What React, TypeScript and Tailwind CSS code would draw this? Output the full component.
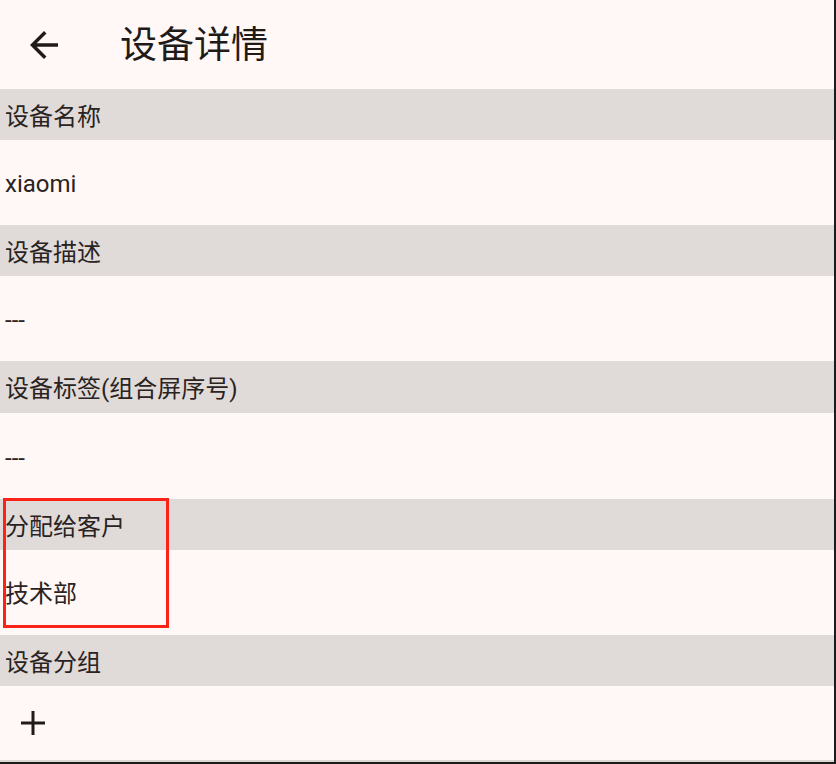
import React from "react";

const font = { fontFamily: 'Roboto, "Noto Sans CJK SC", sans-serif' };

function Header({ label, h }: { label: string; h: string }) {
  return (
    <div className={`flex items-center bg-[#e0dbd8] pl-[5px] pt-[4px] text-[24px] text-[#2a2322] ${h}`}>
      {label}
    </div>
  );
}

function Value({ text, h }: { text: string; h: string }) {
  return (
    <div className={`flex items-center pl-[5px] pt-[3px] text-[24px] text-[#2a2322] ${h}`}>
      {text}
    </div>
  );
}

export default function App() {
  return (
    <div
      className="relative h-[764px] w-[836px] overflow-hidden bg-[#fff8f6] border-r-[2px] border-r-[#1c1b1b]"
      style={font}
    >
      <div className="flex flex-col">
        <div className="flex h-[89px] items-center">
          <div className="ml-[23px] flex h-[42px] w-[42px] items-center justify-center">
            <svg width="42" height="42" viewBox="0 0 24 24">
              <path
                d="M20 11H7.83l5.59-5.59L12 4l-8 8 8 8 1.41-1.41L7.83 13H20v-2z"
                fill="#201a19"
              />
            </svg>
          </div>
          <div className="ml-[55px] pt-[2px] text-[37px] text-[#201a19] leading-none">设备详情</div>
        </div>
        <Header label="设备名称" h="h-[51px]" />
        <Value text="xiaomi" h="h-[85px]" />
        <Header label="设备描述" h="h-[51px]" />
        <Value text="---" h="h-[85px]" />
        <Header label="设备标签(组合屏序号)" h="h-[52px]" />
        <Value text="---" h="h-[86px]" />
        <Header label="分配给客户" h="h-[51px]" />
        <Value text="技术部" h="h-[85px]" />
        <Header label="设备分组" h="h-[51px]" />
        <div className="flex h-[74px] items-center pl-[21px]">
          <svg width="24" height="24" viewBox="0 0 24 24">
            <path d="M12 0v24M0 12h24" stroke="#201a19" strokeWidth="3" />
          </svg>
        </div>
        <div className="h-[2px] bg-[#dcd8d6]" />
        <div className="h-[2px] bg-[#1c1b1b]" />
      </div>
      <div className="absolute left-[3px] top-[498px] h-[130px] w-[166px] border-[3px] border-[#fb2318]" />
    </div>
  );
}
